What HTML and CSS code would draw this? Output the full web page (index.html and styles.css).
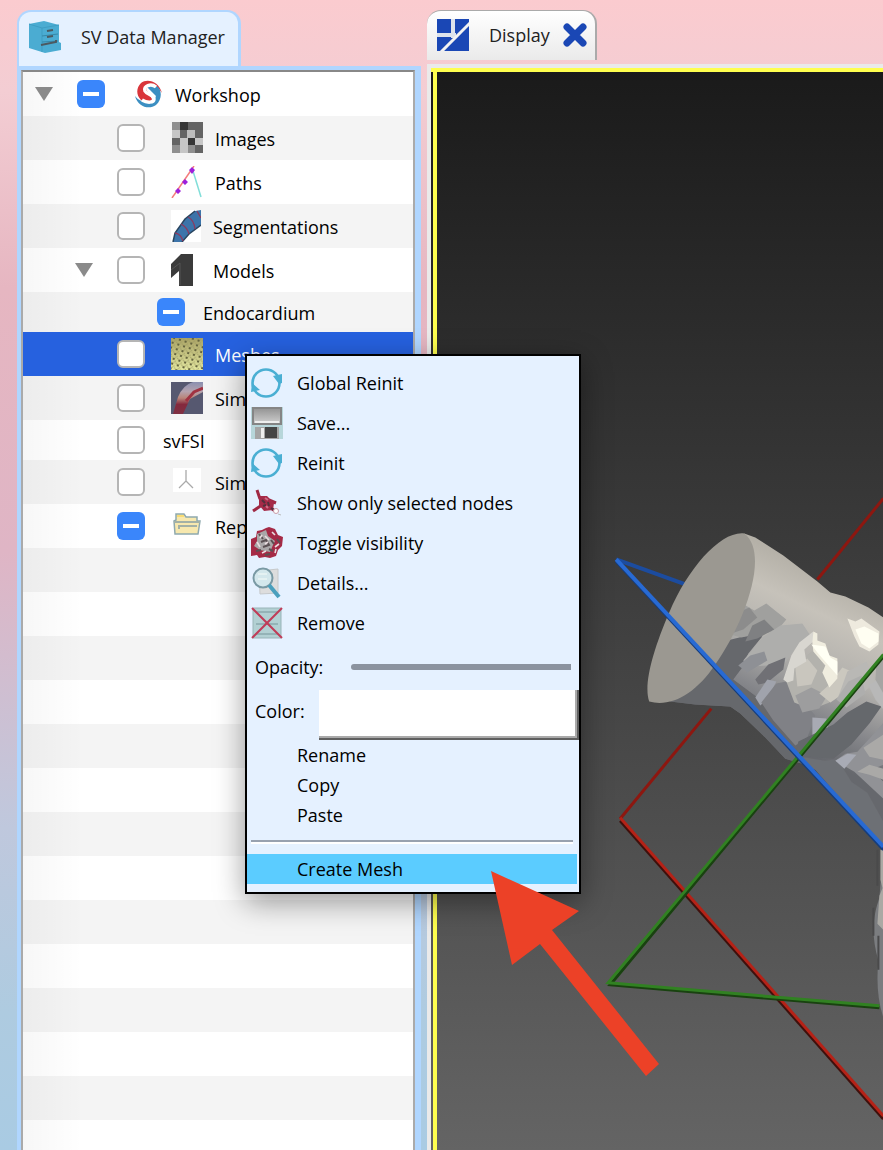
FILE: index.html
```html
<!DOCTYPE html>
<html lang="en">
<head>
<meta charset="utf-8">
<title>SV Data Manager</title>
<link rel="stylesheet" href="styles.css">
</head>
<body>
<svg width="0" height="0" class="defs" aria-hidden="true">
  <defs>
    <symbol id="refresh" viewBox="0 0 32 32">
      <circle cx="15" cy="16" r="13.5" fill="none" stroke="#4aafd3" stroke-width="2.6"/>
      <path d="M22 9l9-2v9l-3 1zM0 25l1-9 8 7z" fill="#4aafd3"/>
    </symbol>
  </defs>
</svg>
<main class="workspace">
  <section class="manager">
    <h2 class="tab tab-active">
      <svg class="icon32" viewBox="0 0 32 32"><path d="M0 3L15 0l15 4v17l2 1v7l-16 3L0 27z" fill="#4bacd2"/><path d="M0 3l13 4v24M13 7l17-3" fill="none" stroke="#3f9dc3"/><path d="M13 15l16-2M13 21l16-1" stroke="#3588a9"/><path d="M18 10l6-1M18 16l6-1M12 24l15-3v-2" fill="none" stroke="#4c5960" stroke-width="2"/></svg>
      <span>SV Data Manager</span>
    </h2>
    <div class="frame">
      <ul class="tree">
        <li class="row l1"><i class="twisty"></i><input type="checkbox" class="mixed" checked aria-label="Workshop">
          <svg class="logo" viewBox="0 0 28 28"><path d="M27 13C24 1 12-2 6 3 1 8 1 15 6 20c4 3 11 2 11-1L11 9c3-5 12-4 16 4z" fill="#d9363b"/><path d="M0 16c3 11 14 14 21 9 6-5 6-14 2-18-4-3-11-3-11 0l9 9c-3 8-15 8-21 0z" fill="#3c8fc2"/><path d="M21 7C16 3 8 6 10 11c2 4 9 3 9 8 0 4-7 4-12 1" fill="none" stroke="#fff" stroke-width="3.5"/></svg>
          <span>Workshop</span></li>
        <li class="row alt l2"><input type="checkbox" aria-label="Images">
          <svg class="icon32" viewBox="0 0 32 32"><path d="M1 0h31v31H1z" fill="#c6c6c6"/><path d="M1 0h8v8H1zM1 23h8v8H1zM17 23h7v8h-7zM16 8h8v8h-8z" fill="#8f8f8f"/><path d="M9 0h8v8H9zM17 16h7v7h-7z" fill="#363636"/><path d="M17 0h15v8H17zM9 8h8v8H9zM24 8h8v8h-8zM1 16h8v7H1zM24 23h8v8h-8z" fill="#646464"/><path d="M16 8h8v8h-8z" fill="#bdbdbd"/></svg>
          <span>Images</span></li>
        <li class="row l2"><input type="checkbox" aria-label="Paths">
          <svg class="icon32" viewBox="0 0 32 32"><path d="M22 5l8 26" stroke="#82ded9" stroke-width="1.5"/><path d="M1 32L23 0" stroke="#f47c7c" stroke-width="1.5"/><path d="M18 4l3-3 3 3-3 4zM11 16l3-3 3 3-3 3zM4 25l3-3 3 3-3 3z" fill="#9d20dc"/></svg>
          <span>Paths</span></li>
        <li class="row alt l2"><input type="checkbox" aria-label="Segmentations">
          <svg class="icon30" viewBox="0 0 30 32"><path fill="#fff" d="M0 0h30v32H0z"/><path d="M2 32L4 23 14 9 24 1l6-1v15L18 24l-7 8z" fill="#3c74aa"/><path d="M2 32L4 23 14 9 24 1M11 32l7-8 12-9" fill="none" stroke="#29455f" stroke-width="1.5"/><path d="M4 23q6 1 8 8M10 14q6 3 8 10M17 7q6 3 7 12M26 1l4 7" fill="none" stroke="#8b3b60" stroke-width="1.3"/></svg>
          <span>Segmentations</span></li>
        <li class="row l2 open"><i class="twisty"></i><input type="checkbox" aria-label="Models">
          <svg class="icon30" viewBox="0 0 30 32"><path d="M0 10L10 0h12v32H8V17L0 24z" fill="#3b3b3b"/><path d="M0 16l9-7v22" fill="none" stroke="#555"/></svg>
          <span>Models</span></li>
        <li class="row alt short l3"><input type="checkbox" class="mixed" checked aria-label="Endocardium"><span>Endocardium</span></li>
        <li class="row selected l2"><input type="checkbox" aria-label="Meshes">
          <svg class="icon32" viewBox="0 0 32 32"><defs><linearGradient id="mg" x2="0" y2="1"><stop stop-color="#aaa365"/><stop offset="1" stop-color="#e2e69f"/></linearGradient><pattern id="mp" width="6" height="5" patternUnits="userSpaceOnUse" patternTransform="rotate(18)"><path d="M0 2l3 2 3-4M3 4L2 6" stroke="#9a9760" fill="none" stroke-width=".7"/><path d="M2 3h2v2H2z" fill="#66653f"/></pattern></defs><path d="M0 0h32v32H0z" fill="url(#mg)"/><path d="M0 0h32v32H0z" fill="url(#mp)"/></svg>
          <span>Meshes</span></li>
        <li class="row alt l2"><input type="checkbox" aria-label="Simulations">
          <svg class="icon32" viewBox="0 0 32 32"><defs><linearGradient id="sg" x2="0" y2="1"><stop stop-color="#8a8fb0"/><stop offset=".3" stop-color="#b5a3ae"/><stop offset=".5" stop-color="#b9857a"/><stop offset=".7" stop-color="#84293d"/><stop offset="1" stop-color="#7f3043"/></linearGradient></defs><path d="M0 0h32v32H0z" fill="#565870"/><path d="M2 32L7 15Q12 3 22 0h10v10L19 17 12 32z" fill="url(#sg)"/><path d="M32 6L23 10 15 19" fill="none" stroke="#a03342" stroke-width="3"/></svg>
          <span>Simulations</span></li>
        <li class="row short l2"><input type="checkbox" aria-label="svFSI"><span>svFSI</span></li>
        <li class="row alt l2"><input type="checkbox" aria-label="Sims">
          <svg class="icon32" viewBox="0 0 32 32"><path d="M2 2h28v24H2z" fill="#fff"/><path d="M15 4v11l-7 7M15 15l7 7" fill="none" stroke="#aaa" stroke-width="1.3"/></svg>
          <span>Sims</span></li>
        <li class="row l2"><input type="checkbox" class="mixed" checked aria-label="Repository">
          <svg class="icon32" viewBox="0 0 32 32"><path d="M4 24L3 11l2-1V4h8l2 3h11v4h3l-2 13z" fill="#f7e8ae" stroke="#8fa9ae" stroke-width="1.5"/><path d="M6 5h7v2H6z" fill="#f9dc73"/><path d="M3 12h26M8 19v-3h18" fill="none" stroke="#a3b1a6" stroke-width="2"/></svg>
          <span>Repository</span></li>
      </ul>
    </div>
  </section>

  <section class="display">
    <h2 class="tab tab-plain">
      <svg class="icon32" viewBox="0 0 32 32"><path d="M0 0h32v32H0z" fill="#1a47b5"/><path d="M16 0v19M0 16h19" stroke="#dde3ec" stroke-width="4"/><path d="M4 33L33 4" stroke="#f2f2f2" stroke-width="3"/></svg>
      <span>Display</span>
      <button class="close" aria-label="Close"><svg viewBox="0 0 24 24"><path d="M4 4l16 16M20 4L4 20" stroke="#1a47b5" stroke-width="7" stroke-linecap="round"/></svg></button>
    </h2>
    <div class="viewport">
      <svg class="scene" viewBox="437 73 446 1077" preserveAspectRatio="xMinYMin slice">
        <defs>
          <linearGradient id="body" gradientUnits="userSpaceOnUse" x1="825" y1="575" x2="745" y2="745"><stop stop-color="#b5b1a8"/><stop offset=".2" stop-color="#c6c2ba"/><stop offset=".45" stop-color="#b4b2ae"/><stop offset=".7" stop-color="#86878b"/><stop offset=".9" stop-color="#66686d"/></linearGradient>
          <path id="shape" d="M744 534L755 538 783 556 817 582 830 593 845 597 868 608 883 618V850L850 810 815 770 802 764 785 759 765 738 740 714 730 707 712 706 695 705 670 702z"/>
          <clipPath id="clip"><use href="#shape"/></clipPath>
          <filter id="soft"><feGaussianBlur stdDeviation=".7"/></filter>
        </defs>
        <path d="M883 499L817 580M711 709L620 819" stroke="#8d1710" stroke-width="3" fill="none"/>
        <path d="M616 560L688 586" stroke="#1c4c9f" stroke-width="4"/>
        <use href="#shape" fill="url(#body)"/>
        <g clip-path="url(#clip)">
          <g filter="url(#soft)">
            <path d="M660 705L700 668 723 642 755 634 762 637 748 654 742 668 733 680 760 700 790 735 810 768H780L735 715z" fill="#66676c"/>
            <path d="M742 604l12 7 12-7 20 16-10 12-15 2-20 4-11-3z" fill="#a0a09e"/>
            <path d="M740 612l9-4 8 10-14 12-12 4z" fill="#8c8c8c"/>
            <path d="M752 626l12-6 10 10-17 9-12 3z" fill="#7f8082"/>
            <path d="M762 638l18-12 22-2 8 12-15 13-10 14-18 3-16 1-8-6z" fill="#aeaeac"/>
            <path d="M738 666l12-10 14-4 3 9-20 12z" fill="#8e9095"/>
            <path d="M755 680l13-15 17-7-2 12-16 13-9 2z" fill="#6f7075"/>
            <path d="M755 698l12-18 9 2-8 16-8 8z" fill="#a0a3ac"/>
            <path d="M776 684l10-2 17 20 12 14-8 22-12 8-22-25-12-18z" fill="#808186"/>
            <path d="M786 682l12-20 16-12 13 22 13 11-11 20-18 7-17-7z" fill="#b3b2ad"/>
            <path d="M795 668l12-9 10 12-6 14-14 2z" fill="#c9c6be"/>
            <path d="M795 696l16-8 16 8-8 13-17 4z" fill="#9d9d9e"/>
            <path d="M819 694l9-8 14-18 9 4-5 20-16 11z" fill="#cbc8bf"/>
            <path d="M847 672l19-10 9 20-18 17-19-2z" fill="#b9b8b5"/>
            <path d="M836 700l12-18 13-6 4 18-19 14z" fill="#aeaead"/>
            <path d="M812 718l14 1 3 15-8 12-9-10z" fill="#a8aab3"/>
            <path d="M833 725l14-12 19-11 15 5-12 17-18 21-18 14-38-3 3-14z" fill="#65676c"/>
            <path d="M800 757l25 4 12-2 14 23 16 11 16 29v30l-37-42-28-32z" fill="#6d6f74"/>
            <path d="M835 761l10-7 12-2 14-15 12-14v42l-12 5 12 12v17l-29-27z" fill="#919296"/>
            <path d="M835 761l12-7 9 1-12 14z" fill="#a8abb5"/>
            <path d="M863 748l20-13v25l-14-3zM857 772l12-7 14 4v11l-14-5z" fill="#aaa9a7"/>
            <path d="M868 686l8-5 7 9v20l-8-10z" fill="#b8b8b8"/>
            <path d="M876 662l7-6v38l-8-14z" fill="#a5a5a3"/>
          </g>
          <path d="M783 680l4-12 4-12 8-13 14-11 1 9-10 9 2 12-12 7-1 12-6 2z" fill="#d8d6d0"/>
          <path d="M813 632l4 2v7l8 3 4 12 8 3v20l-8 9-7-15 3-7-12-14-1-9z" fill="#f0eddf"/>
          <path d="M811 645l14 2 5 11 7 4v14l-8-9-12-14z" fill="#fffff4"/>
          <path d="M847 619l8 3 6-3 18 13-1 13-9 7-10-5-5-10z" fill="#eeeade"/>
          <path d="M855 630l9-3 14 7v8l-9 7-8-5z" fill="#fffef2"/>
        </g>
        <path d="M883 846V1018C877 1000 876 980 878 961C870 934 873 915 879 898z" fill="#7b7d80"/>
        <path d="M879 896l4-10v44l-6-6zM880 850h3v42l-3-12z" fill="#aaa9a4"/>
        <path d="M877 850v36M873 908v28M878 936v34" stroke="#4a4a4b" stroke-width="2"/>
        <path d="M744 534C721 531 688 568 669 613C653 650 643 685 649 702C670 708 695 695 715 665C744 624 770 554 744 534z" fill="#9b9891"/>
        <path d="M620 821L883 1119" stroke="#3f100c" stroke-width="3"/>
        <path d="M620 818L883 1116" stroke="#b52217" stroke-width="3"/>
        <path d="M883 657L610 985L879 1008" fill="none" stroke="#194210" stroke-width="3"/>
        <path d="M883 655L608 983L879 1006" fill="none" stroke="#318122" stroke-width="3"/>
        <path d="M616 562L883 850" stroke="#153d7d" stroke-width="3"/>
        <path d="M616 560L883 847" stroke="#286ad3" stroke-width="4"/>
      </svg>
    </div>
  </section>

  <div class="menu" role="menu">
    <button class="item"><svg class="icon32"><use href="#refresh"/></svg><span>Global Reinit</span></button>
    <button class="item"><svg class="icon32" viewBox="0 0 32 32"><defs><linearGradient id="fg" x2="0" y2="1"><stop stop-color="#939393"/><stop offset="1" stop-color="#d0d0d0"/></linearGradient></defs><path d="M0 0h32v32H0z" fill="#b7d6da"/><path d="M2 1h28v16H2z" fill="url(#fg)" stroke="#858585" stroke-width="2"/><path d="M4 14h24v2H4z" fill="#eee"/><path d="M4 20h24v12H4z" fill="#a5a5a5"/><path d="M14 20h12v11H14z" fill="#454545"/><path d="M10 21h3v10h-3z" fill="#eee"/></svg><span>Save...</span></button>
    <button class="item"><svg class="icon32"><use href="#refresh"/></svg><span>Reinit</span></button>
    <button class="item"><svg class="icon32" viewBox="0 0 32 32"><path d="M6 3l3 9M2 24l9-6M10 14l14 10M18 13l7 3" stroke="#9f2944" stroke-width="3"/><path d="M8 9l8 0 7 7-1 7-9 1-5-6z" fill="#a52a48"/><path d="M11 13l3 3M17 15l1 4M12 19l3-1M20 21l3 2" stroke="#54303d" stroke-width="2"/><path d="M14 11l3 2M15 19l2 2" stroke="#cf6e87" stroke-width="2"/><circle cx="25" cy="24" r="2.5" fill="#fff" stroke="#c99da8"/><path d="M27 27l3 1" stroke="#bbb"/></svg><span>Show only selected nodes</span></button>
    <button class="item"><svg class="icon32" viewBox="0 0 32 32"><path d="M15 1l3-1 6 2 3 6 5 2-1 9-4 4-2 6-6 2-5-1-6 1-2-3-6 1V12l5-2 1-6 5-1z" fill="#a52a46"/><path d="M6 7l9-4 2 6 7 5-2 4-3 7-10-2-6-4 3-5z" fill="#aaa7a8"/><path d="M8 7l4 5M10 15l5-2 3 5-6 2M20 13l3 4M5 24l5-1M14 28l5-1M26 12l3 4M18 22l4 2" fill="none" stroke="#5b5053" stroke-width="2"/><path d="M9 11l2-3M14 9l4 4M6 15l3 5M14 17l3-2M24 20l4-3M21 5l3 3M11 26l4-2M24 26l1-4" stroke="#eadde0" stroke-width="1.6"/></svg><span>Toggle visibility</span></button>
    <button class="item"><svg class="icon32" viewBox="0 0 32 32"><path d="M8 4l19-2v24l-18 1z" fill="#ddd" stroke="#c6c9cb"/><circle cx="12" cy="11" r="9.5" fill="#d3e7ec" stroke="#7999a4" stroke-width="2"/><path d="M7 7h9M7 12h9" stroke="#e4f1f2" stroke-width="2"/><path d="M18 18l10 12" stroke="#4a9fbd" stroke-width="4"/></svg><span>Details...</span></button>
    <button class="item"><svg class="icon32" viewBox="0 0 32 32"><path d="M2 1h28v30H2z" fill="#b2d0d3" stroke="#99b4b8"/><path d="M5 5h22M5 17h22M5 27h22" stroke="#94b3b7" stroke-width="2"/><path d="M1 1l30 30M31 1L1 31" stroke="#c03c58" stroke-width="2"/></svg><span>Remove</span></button>
    <label class="field opacity"><span>Opacity:</span><input type="range" class="slider"></label>
    <div class="field color"><span id="color-label">Color:</span><button class="swatch" aria-labelledby="color-label"></button></div>
    <button class="item plain">Rename</button>
    <button class="item plain">Copy</button>
    <button class="item plain">Paste</button>
    <hr class="rule">
    <button class="item plain current">Create Mesh</button>
  </div>

  <svg class="arrow" viewBox="0 0 170 206" aria-hidden="true"><path d="M0 0l88 40-27 19 107 134-13 12L49 73 21 94z" fill="#ec4127"/></svg>
</main>
</body>
</html>
```
FILE: styles.css
```css
* { box-sizing: border-box; }
body {
  margin: 0;
  font: 500 18px/24px "Open Sans", "Noto Sans", sans-serif;
  color: #111;
}
button { font: inherit; color: inherit; border: 0; background: none; padding: 0; }
.defs { position: absolute; }
.icon32 { width: 32px; height: 32px; flex: none; }
.icon30 { width: 30px; height: 32px; flex: none; }

.workspace {
  position: relative;
  display: flex;
  gap: 6px;
  height: 100vh;
  padding: 10px 0 0 17px;
  overflow: hidden;
  background: linear-gradient(#fbcbcf 0, #f3cdd3 8%, #e6b6c1 25%, #dfb5c5 48%, #bfc8dd 72%, #aecbe0 88%, #a9cbe3 100%);
}
.tab {
  display: flex;
  align-items: center;
  margin: 0;
  font: inherit;
  border-radius: 14px 14px 0 0;
}
.tab-active {
  align-self: flex-start;
  height: 56px;
  gap: 20px;
  padding: 0 13px 4px 10px;
  color: #222;
  background: #e5f1ff;
  border: 2px solid #b0d6ff;
  border-width: 2px 3px 0 2px;
}
.manager { display: flex; flex-direction: column; flex: 0 0 404px; }
.frame {
  flex: 1;
  min-height: 0;
  border: solid #b0d6ff;
  border-width: 4px 6px 0 4px;
}
.tree {
  height: 100%;
  margin: 0;
  padding: 0;
  list-style: none;
  overflow: hidden;
  border: solid #aaa;
  border-width: 2px 2px 0;
  border-top-color: #888;
  background: linear-gradient(90deg, rgba(0,0,0,.03), transparent 60px), repeating-linear-gradient(#fff 0 36px, #f4f4f4 36px 80px, #fff 80px 88px);
}
.row {
  display: flex;
  align-items: center;
  height: 44px;
  color: #000;
  background: linear-gradient(90deg, rgba(0,0,0,.03), transparent 60px) #fff;
}
.row.short { height: 40px; }
.row.alt { background-color: #f4f4f4; }
.row.selected { background: #2661df; color: #fff; }
.row span { padding-top: 2px; }
.row input {
  appearance: none;
  flex: none;
  width: 28px;
  height: 28px;
  margin: 0 26px 0 0;
  border: 2px solid #b5b5b5;
  border-radius: 6px;
  background: #fff;
}
.row input.mixed { border: 0; background: linear-gradient(#fff, #fff) center / 16px 4px no-repeat #3a86fb; }
.row svg { margin-right: 12px; }
.l1 { padding-left: 12px; }
.l1 .twisty { margin-right: 24px; }
.l1 input { margin-right: 30px; }
.row .logo { width: 28px; height: 28px; flex: none; }
.l2 { padding-left: 94px; }
.l2.open { padding-left: 52px; }
.l2.open .twisty { margin-right: 24px; }
.l3 { padding-left: 134px; }
.l3 input, .short.l2 input { margin-right: 18px; }
.twisty { border: solid transparent; border-width: 14px 9px 0; border-top-color: #8a8a8a; }

.display { display: flex; flex-direction: column; flex: 1; min-width: 0; }
.tab-plain {
  align-self: flex-start;
  height: 50px;
  margin-bottom: 4px;
  padding: 0 8px 2px 10px;
  color: #222;
  background: linear-gradient(#fff, #eaeaea);
  border: solid #aaa;
  border-width: 1px 2px 0 0;
}
.tab-plain span { margin: 0 13px 0 20px; }
.close { width: 24px; height: 24px; }
.close svg { display: block; }
.viewport {
  flex: 1;
  min-height: 0;
  border: solid #eaeaea;
  border-width: 4px 0 0 4px;
  padding: 4px 0 0 6px;
  background: linear-gradient(#ffff4f, #ffff4f) 0 0 / 100% 4px no-repeat, linear-gradient(#ffff4f, #ffff4f) 2px 0 / 4px 100% no-repeat, linear-gradient(#1a1a1a, #646464);
}
.scene { display: block; width: 100%; height: 100%; }

.menu {
  position: absolute;
  left: 245px;
  top: 354px;
  width: 336px;
  padding: 7px 0 8px;
  color: #000;
  background: #e5f1ff;
  border: 2px solid #000;
  box-shadow: 0 8px 28px rgba(0,0,0,.4);
}
.item {
  display: flex;
  align-items: center;
  gap: 14px;
  width: 100%;
  height: 40px;
  padding-left: 4px;
  text-align: left;
}
.item.plain { height: 30px; padding-left: 50px; }
.item.current { width: calc(100% - 2px); background: #5bccff; }
.field { display: flex; align-items: center; padding-left: 8px; }
.opacity { height: 47px; gap: 28px; padding-right: 8px; }
.slider {
  appearance: none;
  flex: 1;
  min-width: 0;
  height: 6px;
  margin: 0;
  border-radius: 3px 0 0 3px;
  background: #8b939f;
}
.slider::-webkit-slider-thumb { appearance: none; width: 0; height: 0; }
.color { height: 50px; gap: 14px; }
.color span { padding-bottom: 8px; }
.swatch {
  flex: 1;
  height: 50px;
  background: #fff;
  border: 2px solid #5f5f5f;
  border-width: 0 2px 2px 0;
  box-shadow: inset -2px -2px #aaa;
}
.rule {
  height: 4px;
  margin: 10px 6px 10px 4px;
  border: 0;
  border-top: 2px solid #98a1af;
  background: #fff;
}
.arrow { position: absolute; left: 491px; top: 871px; width: 170px; height: 206px; }
```
